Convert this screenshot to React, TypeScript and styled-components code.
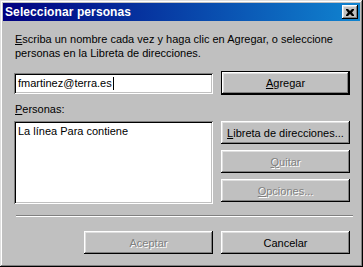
import React from 'react'
import styled, { createGlobalStyle, css } from 'styled-components'

const GlobalStyle = createGlobalStyle`
  html, body {
    margin: 0;
    padding: 0;
    background: #c0c0c0;
  }
  body {
    font-family: 'Liberation Sans', Arial, sans-serif;
    font-size: 11px;
    color: #000;
  }
`

const App: React.FC = () => {
  return (
    <>
      <GlobalStyle />
      <Window>
        <TitleBar>
          <TitleText>Seleccionar personas</TitleText>
          <CloseButton>
            <svg width="8" height="7" viewBox="0 0 8 7">
              <path d="M0 0h2l2 2 2-2h2v1l-2 2.5 2 2.5v1h-2l-2-2-2 2h-2v-1l2-2.5-2-2.5z" fill="#000" />
            </svg>
          </CloseButton>
        </TitleBar>

        <Body>
          <Instructions>
            <u>E</u>scriba un nombre cada vez y haga clic en Agregar, o seleccione personas en la Libreta de direcciones.
          </Instructions>

          <TopRow>
            <TextField>
              fmartinez@terra.es<Caret />
            </TextField>
            <Button $default>
              <u>A</u>gregar
            </Button>
          </TopRow>

          <FieldLabel>
            <u>P</u>ersonas:
          </FieldLabel>

          <ListRow>
            <ListBox>La línea Para contiene</ListBox>
            <ButtonColumn>
              <Button>
                <u>L</u>ibreta de direcciones...
              </Button>
              <Button $disabled>
                <u>Q</u>uitar
              </Button>
              <Button $disabled>
                <u>O</u>pciones...
              </Button>
            </ButtonColumn>
          </ListRow>

          <Separator />

          <Footer>
            <Button $disabled>Aceptar</Button>
            <Button>Cancelar</Button>
          </Footer>
        </Body>
      </Window>
    </>
  )
}

const Window = styled.div`
  box-sizing: border-box;
  width: 363px;
  height: 267px;
  padding: 3px;
  background: #c0c0c0;
  box-shadow: inset -1px -1px #000, inset 1px 1px #dfdfdf, inset -2px -2px #808080,
    inset 2px 2px #fff;
  display: flex;
  flex-direction: column;
`

const TitleBar = styled.div`
  height: 18px;
  display: flex;
  align-items: center;
  justify-content: space-between;
  padding: 0 2px 0 2px;
  background: linear-gradient(to right, #000080, #1084d0);
`

const TitleText = styled.span`
  color: #fff;
  font-weight: bold;
  font-size: 12px;
  letter-spacing: 0.1px;
`

const CloseButton = styled.div`
  box-sizing: border-box;
  width: 16px;
  height: 14px;
  display: flex;
  align-items: center;
  justify-content: center;
  background: #c0c0c0;
  box-shadow: inset -1px -1px #000, inset 1px 1px #fff, inset -2px -2px #808080,
    inset 2px 2px #dfdfdf;
`

const Body = styled.div`
  flex: 1;
  padding: 0 10px 0 11px;
  display: flex;
  flex-direction: column;
`

const Instructions = styled.p`
  margin: 11px 0 0 1px;
  line-height: 14px;
  width: 330px;
`

const TopRow = styled.div`
  margin-top: 11px;
  display: grid;
  grid-template-columns: 199px 129px;
  column-gap: 8px;
  align-items: center;
`

const sunken = css`
  box-sizing: border-box;
  background: #fff;
  box-shadow: inset 1px 1px #808080, inset -1px -1px #fff, inset 2px 2px #000,
    inset -2px -2px #c0c0c0;
`

const TextField = styled.div`
  ${sunken};
  height: 21px;
  padding: 3px 4px;
  line-height: 15px;
  white-space: nowrap;
  display: flex;
  align-items: center;
`

const Caret = styled.span`
  display: inline-block;
  width: 1px;
  height: 13px;
  background: #000;
  margin-left: 1px;
`

const FieldLabel = styled.div`
  margin: 7px 0 0 1px;
  line-height: 14px;
`

const ListRow = styled.div`
  margin-top: 5px;
  display: grid;
  grid-template-columns: 199px 129px;
  column-gap: 8px;
`

const ListBox = styled.div`
  ${sunken};
  height: 83px;
  padding: 3px 4px;
  line-height: 14px;
`

const ButtonColumn = styled.div`
  display: flex;
  flex-direction: column;
  gap: 6px;
`

const Button = styled.div<{ $default?: boolean; $disabled?: boolean }>`
  box-sizing: border-box;
  height: ${({ $default }) => ($default ? '24px' : '23px')};
  width: 129px;
  display: flex;
  align-items: center;
  justify-content: center;
  background: #c0c0c0;
  box-shadow: inset -1px -1px #000, inset 1px 1px #fff, inset -2px -2px #808080,
    inset 2px 2px #dfdfdf;
  ${({ $default }) =>
    $default &&
    css`
      box-shadow: inset 0 0 0 1px #000, inset -2px -2px #000, inset 2px 2px #fff,
        inset -3px -3px #808080, inset 3px 3px #dfdfdf;
    `}
  ${({ $disabled }) =>
    $disabled &&
    css`
      color: #808080;
      text-shadow: 1px 1px #fff;
    `}
`

const Separator = styled.div`
  margin: 11px 0 0 2px;
  width: 337px;
  height: 2px;
  border-top: 1px solid #808080;
  border-bottom: 1px solid #fff;
  box-sizing: border-box;
`

const Footer = styled.div`
  margin-top: 14px;
  display: flex;
  justify-content: flex-end;
  gap: 8px;
`

export default App
